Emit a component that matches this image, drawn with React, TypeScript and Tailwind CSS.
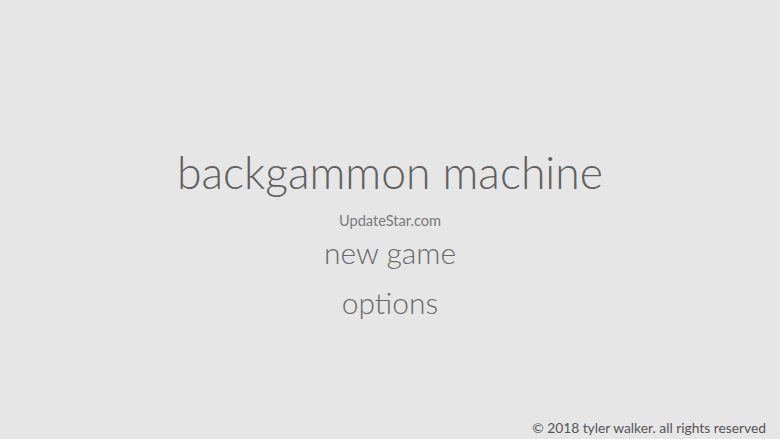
export default function App() {
  return (
    <div
      className="relative flex h-[439px] w-[780px] flex-col items-center overflow-hidden bg-[#e6e6e6] text-[#555]"
      style={{ fontFamily: 'Lato, "Open Sans", sans-serif' }}
    >
      <h1 className="mt-[146px] text-[44.5px] font-light leading-[52px] text-[#606060]">
        backgammon machine
      </h1>
      <p className="mt-[13px] text-[14.6px] leading-[20px] text-[#7a7a7a]">UpdateStar.com</p>
      <button className="mt-[3px] text-[30px] font-light leading-[36px] text-[#6a6a6a]">new game</button>
      <button className="mt-[14px] text-[30px] font-light leading-[36px] text-[#6a6a6a]">options</button>
      <p className="absolute bottom-[1px] right-[14px] text-[13.8px] leading-[20px] text-[#555]">
        © 2018 tyler walker. all rights reserved
      </p>
    </div>
  );
}
